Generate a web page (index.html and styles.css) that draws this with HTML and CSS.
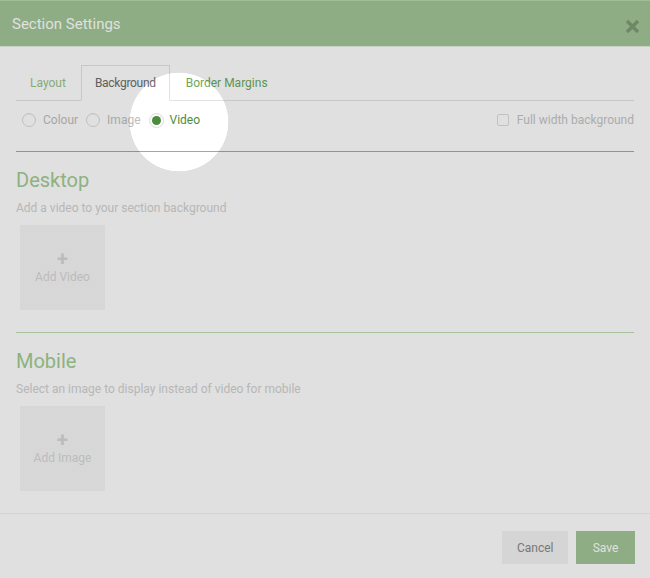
FILE: index.html
```html
<!DOCTYPE html>
<html lang="en">
<head>
<meta charset="utf-8">
<title>Section Settings</title>
<link rel="stylesheet" href="styles.css">
</head>
<body>
<div class="modal">
  <header class="modal-header">
    <h1 class="modal-title">Section Settings</h1>
    <button class="close" type="button" aria-label="Close">
      <svg width="15" height="15" viewBox="0 0 15 15"><path d="M2 2 L13 13 M13 2 L2 13" stroke="#7d9b74" stroke-width="3.4" fill="none"/></svg>
    </button>
  </header>
  <div class="modal-body">
    <ul class="tabs">
      <li class="tab tab-muted">Layout</li>
      <li class="tab tab-active">Background</li>
      <li class="tab tab-link">Border Margins</li>
    </ul>
    <div class="bg-options">
      <div class="radios">
        <label class="radio"><span class="radio-circle"></span><span class="radio-text">Colour</span></label>
        <label class="radio"><span class="radio-circle"></span><span class="radio-text">Image</span></label>
        <label class="radio radio-checked"><span class="radio-circle"><span class="radio-dot"></span></span><span class="radio-text">Video</span></label>
      </div>
      <label class="check"><span class="checkbox"></span><span>Full width background</span></label>
    </div>
    <section class="group group-first">
      <h2 class="group-title">Desktop</h2>
      <p class="group-desc">Add a video to your section background</p>
      <div class="upload"><span class="upload-plus">+</span><span class="upload-text">Add Video</span></div>
    </section>
    <section class="group group-last">
      <h2 class="group-title">Mobile</h2>
      <p class="group-desc">Select an image to display instead of video for mobile</p>
      <div class="upload"><span class="upload-plus">+</span><span class="upload-text">Add Image</span></div>
    </section>
  </div>
  <footer class="modal-footer">
    <button class="btn btn-cancel" type="button">Cancel</button>
    <button class="btn btn-save" type="button">Save</button>
  </footer>
  <div class="spotlight"></div>
</div>
</body>
</html>
```
FILE: styles.css
```css
* { box-sizing: border-box; }
html, body { margin: 0; padding: 0; background: #fff; }
body { font-family: Roboto, "Liberation Sans", Arial, sans-serif; }

.modal {
  position: relative;
  width: 650px;
  height: 578px;
  background: #fff;
  overflow: hidden;
}

.modal-header {
  display: flex;
  align-items: center;
  justify-content: space-between;
  height: 47px;
  padding: 0 10px 0 12px;
  background: #a2c596;
  border-top: 1px solid #b9d6ae;
  border-bottom: 1px solid #e2eddd;
}
.modal-title {
  margin: 0;
  font-size: 15px;
  font-weight: 400;
  color: #fff;
}
.close {
  border: 0;
  background: none;
  padding: 0;
  margin-top: 5px;
  display: flex;
}

.modal-body { padding: 0 16px; }

.tabs {
  list-style: none;
  margin: 18px 0 0;
  padding: 0;
  display: flex;
  border-bottom: 1px solid #e2e2e2;
}
.tab {
  font-size: 12px;
  line-height: 15px;
  padding: 10px 13px 9px;
  border: 1px solid transparent;
  margin-right: 2px;
  margin-bottom: -1px;
}
.tab-muted { color: #98c389; margin-right: 1px; }
.tab-active {
  color: #6b6b6b;
  border-color: #e2e2e2;
  border-bottom-color: #fff;
  background: #fff;
  letter-spacing: -0.3px;
}
.tab-link { color: #6ca85c; }

.bg-options {
  display: flex;
  justify-content: space-between;
  align-items: center;
  padding: 11px 0 23px;
  border-bottom: 1px solid #8fb880;
  font-size: 12px;
  line-height: 16px;
}
.radios { display: flex; margin-left: 6px; }
.radio {
  display: flex;
  align-items: center;
  margin-right: 8px;
  color: #bdbdbd;
}
.radio-circle {
  width: 14px;
  height: 14px;
  border-radius: 50%;
  border: 1px solid #dcdcdc;
  box-shadow: inset 0 1px 1px rgba(0,0,0,0.05);
  margin-right: 7px;
  display: flex;
  align-items: center;
  justify-content: center;
  background: #fff;
}
.radio-checked { color: #4c8c3c; }
.radio-checked .radio-circle { width: 15px; height: 15px; border-color: #dcdcdc; margin-right: 6px; }
.radio-dot {
  width: 9px;
  height: 9px;
  border-radius: 50%;
  background: #4c8c3c;
}
.check {
  display: flex;
  align-items: center;
  color: #c4c4c4;
}
.checkbox {
  width: 12px;
  height: 12px;
  border: 1px solid #dcdcdc;
  border-radius: 2px;
  margin-right: 8px;
}

.group { padding-top: 16px; }
.group-first { padding-bottom: 22px; border-bottom: 1px solid #bcdcb1; }
.group-last { padding-bottom: 22px; }
.group-title {
  margin: 0;
  font-size: 20px;
  line-height: 24px;
  font-weight: 400;
  color: #a1ca91;
}
.group-desc {
  margin: 8px 0 9px;
  font-size: 12px;
  line-height: 16px;
  color: #d0d0d0;
}
.upload {
  width: 85px;
  height: 85px;
  margin-left: 4px;
  background: #f5f5f5;
  display: flex;
  flex-direction: column;
  align-items: center;
  justify-content: center;
  color: #d6d6d6;
  font-size: 12px;
  padding-top: 1px;
}
.upload-plus {
  font-size: 20px;
  line-height: 16px;
  font-weight: 700;
}
.upload-text { line-height: 16px; margin-top: 2px; }

.modal-footer {
  border-top: 1px solid #f1f1f1;
  display: flex;
  justify-content: flex-end;
  gap: 8px;
  padding: 17px 15px 0;
}
.btn {
  height: 33px;
  border: 0;
  font-family: inherit;
  font-size: 12px;
  padding: 0 15px;
}
.btn-cancel { background: #f2f2f2; color: #888; width: 66px; }
.btn-save { background: #a2c596; color: #fff; width: 59px; }

.spotlight {
  position: absolute;
  inset: 0;
  pointer-events: none;
  background: radial-gradient(circle at 179px 122px, rgba(0,0,0,0) 49px, rgba(0,0,0,0.12) 49.6px);
}
```
